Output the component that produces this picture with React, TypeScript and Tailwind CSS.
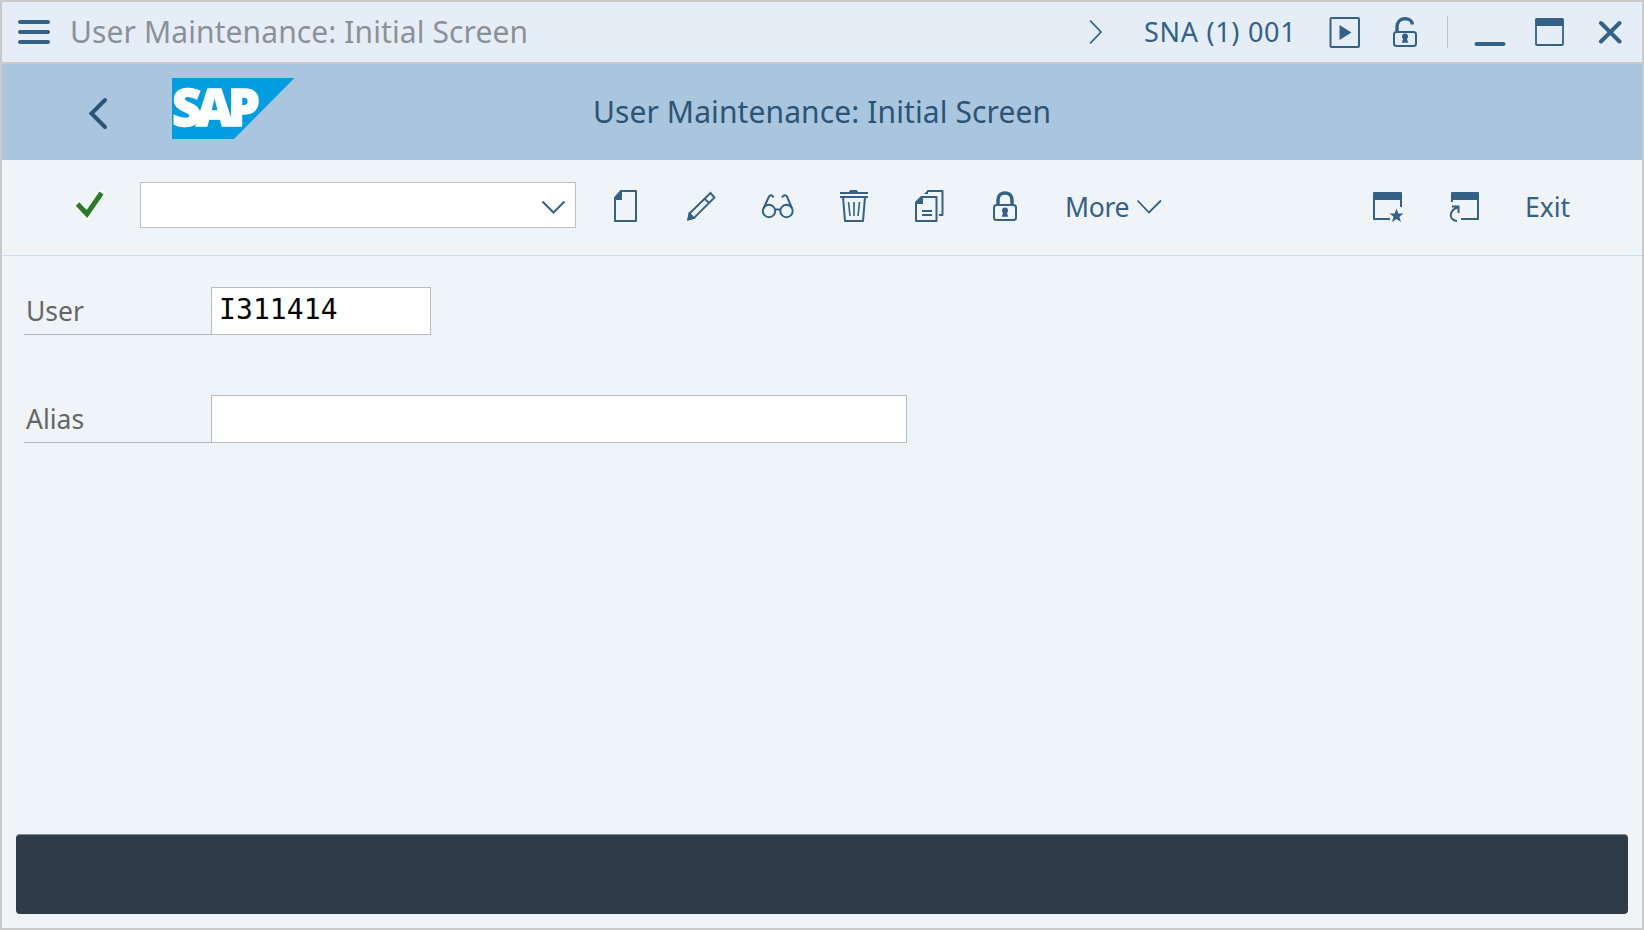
import React from "react";

const INK = "#346187";

type IconProps = { className?: string; w?: number; h?: number; children: React.ReactNode };

function Icon({ className = "", w = 32, h = 34, children }: IconProps) {
  return (
    <svg
      className={"block shrink-0 " + className}
      width={w}
      height={h}
      viewBox={`0 0 ${w} ${h}`}
      fill="none"
      stroke={INK}
      strokeWidth={2}
    >
      {children}
    </svg>
  );
}

function Keyhole({ x, y }: { x: number; y: number }) {
  return (
    <g stroke="none" fill={INK}>
      <circle cx={x} cy={y} r={3} />
      <path d={`M${x - 1.4} ${y + 1} L${x - 3.3} ${y + 6.2} H${x + 3.3} L${x + 1.4} ${y + 1} Z`} />
    </g>
  );
}

function TitleBar() {
  return (
    <header className="flex h-[62px] shrink-0 items-start border-b-2 border-[#cacaca] bg-[#e5eef7]">
      <Icon className="ml-4 mt-[18px]" w={32} h={24}>
        <path d="M2 2H30M2 12H30M2 22H30" strokeWidth={4} strokeLinecap="round" />
      </Icon>
      <span className="ml-[20px] mt-[10px] w-[480px] whitespace-nowrap text-[30px] leading-[40px] tracking-[0.1px] text-[#8c9197]">
        User Maintenance: Initial Screen
      </span>
      <Icon className="ml-auto mt-[17px]" w={16} h={26}>
        <path d="M2 1.5L13 13L2 24.5" strokeWidth={1.8} />
      </Icon>
      <span className="ml-[40px] mt-[11px] w-[153px] whitespace-nowrap text-[27px] leading-[38px] tracking-[0.7px] text-[#346187]">
        SNA (1) 001
      </span>
      <Icon className="ml-[32px] mt-[15px]" w={32} h={32}>
        <rect x={1.5} y={1} width={28.5} height={29} rx={1} />
        <path d="M10.5 8V23L22.5 15.5Z" fill={INK} stroke="none" />
      </Icon>
      <Icon className="ml-[32px] mt-[15px]" w={26} h={32}>
        <path d="M4 14V10C4 -0.5 18.5 -0.5 19.5 7.5" strokeWidth={3.4} />
        <rect x={1} y={15} width={22} height={14} rx={2.5} />
        <Keyhole x={12} y={19.5} />
      </Icon>
      <span className="ml-[28px] mt-[14px] h-8 w-px bg-[#bfc3c8]" />
      <Icon className="ml-[26px] mt-[15px]" w={32} h={32}>
        <path d="M2.5 27H29.5" strokeWidth={4} strokeLinecap="round" />
      </Icon>
      <Icon className="ml-[29px] mt-[15px]" w={30} h={32}>
        <rect x={1} y={2} width={27} height={26} rx={1} strokeWidth={1.8} />
        <path d="M0.5 1.5H28.5V9H0.5Z" fill={INK} stroke="none" />
      </Icon>
      <Icon className="ml-[33px] mr-[20px] mt-[15px]" w={24} h={32}>
        <path d="M3 6L21.5 24.5M21.5 6L3 24.5" strokeWidth={4} strokeLinecap="round" />
      </Icon>
    </header>
  );
}

function BrandBar() {
  return (
    <div className="grid h-24 shrink-0 grid-cols-[1fr_auto_1fr] items-start bg-[#aac5de]">
      <div className="flex">
        <Icon className="ml-[86px] mt-[33px]" w={22} h={34}>
          <path d="M17 3L3.5 16.5L17 30" stroke="#2b5475" strokeWidth={4} strokeLinecap="round" />
        </Icon>
        <svg className="ml-[62px] mt-[14px] block overflow-visible" width={123} height={61} viewBox="0 0 123 61">
          <path d="M0 0H122.5L62 61H0Z" fill="#009de0" />
          <text
            x={0}
            y={47.5}
            textLength={88}
            lengthAdjust="spacing"
            fill="#fff"
            stroke="#fff"
            strokeWidth={1.3}
            fontFamily="'Open Sans', 'Noto Sans', sans-serif"
            fontWeight={800}
            fontSize={51}
          >
            SAP
          </text>
        </svg>
      </div>
      <h1 className="mt-[28px] whitespace-nowrap text-[30px] leading-[40px] tracking-[0.1px] text-[#2b5475]">
        User Maintenance: Initial Screen
      </h1>
      <div />
    </div>
  );
}

function Toolbar() {
  return (
    <div className="flex h-24 shrink-0 items-start border-b border-[#d0dfed]">
      <Icon className="ml-[72px] mt-[28px]" w={32} h={34}>
        <path d="M4.5 17L13 26L27.500 6" stroke="#fff" strokeWidth={8} strokeLinecap="round" />
        <path d="M3.5 16L13 26L27.5 5" stroke="#297d27" strokeWidth={5} />
      </Icon>
      <div className="ml-[34px] mt-[22px] flex h-[46px] w-[436px] items-center justify-end border border-[#bcc0c4] bg-white pr-[8px] pt-[3px]">
        <Icon w={26} h={16}>
          <path d="M1.5 2.5L12.5 13.5L23.5 2.5" />
        </Icon>
      </div>
      <Icon className="ml-[36px] mt-[29px]" w={28} h={34}>
        <path d="M9 2H24V32H3V9Z" strokeLinejoin="round" />
        <path d="M10 1V11H2V9L9 1Z" fill={INK} stroke="none" />
      </Icon>
      <Icon className="ml-[46px] mt-[29px]" w={32} h={34}>
        <path d="M3.5 24.5L24.5 4L28.5 8.5L8 29L2.5 30.5ZM18.5 9.5L23 14" strokeWidth={1.9} />
        <path d="M3 22.5L9.5 29.5L1 31.5Z" fill={INK} stroke="none" />
      </Icon>
      <Icon className="ml-[43px] mt-[29px]" w={34} h={34}>
        <circle cx={8} cy={22} r={6.2} />
        <circle cx={25.5} cy={22} r={6.2} />
        <path d="M14 20.5H19.5M2.5 19.5L8 7.5Q10.500 4.5 12.5 8.5M31 19.5L26 7.5Q23.5 4.5 21 8.5" />
      </Icon>
      <Icon className="ml-[43px] mt-[29px]" w={32} h={34}>
        <path d="M2 4H30M2 8H30" />
        <path d="M11 4Q11 1 13 1H18Q20 1 20 4Z" fill={INK} stroke="none" />
        <path d="M5 8L7 32H25L27 8" strokeLinejoin="round" />
        <path d="M10.5 13L12 27M16 13V27M21.5 13L20 27" strokeWidth={1.6} />
      </Icon>
      <Icon className="ml-[43px] mt-[29px]" w={32} h={34}>
        <path d="M9 8H23.5V32H3V14Z" strokeLinejoin="round" />
        <path d="M10 7V15H2V13L8 7Z" fill={INK} stroke="none" />
        <path d="M14 2H29.5V26H26M9 22H19M9 26H19" strokeLinejoin="round" />
        <path d="M11 5L15 1V5Z" fill={INK} stroke="none" />
      </Icon>
      <Icon className="ml-[47px] mt-[30px]" w={28} h={34}>
        <path d="M6 16V10C6 0.5 20 0.5 20 10V16" strokeWidth={3.5} />
        <rect x={2} y={15} width={22} height={15} rx={2.5} />
        <Keyhole x={13} y={20.5} />
      </Icon>
      <span className="ml-[45px] mt-[28px] w-[66px] whitespace-nowrap text-[26.5px] leading-[38px] tracking-[-0.3px] text-[#346187]">
        More
      </span>
      <Icon className="ml-[5px] mt-[39px]" w={28} h={16}>
        <path d="M1.5 1.5L13 13.5L25 1.5" strokeWidth={1.8} />
      </Icon>
      <Icon className="ml-auto mt-[29px]" w={32} h={34}>
        <path d="M2 4V30H18M29 4V18" strokeLinejoin="round" />
        <rect x={1} y={3} width={29} height={8} rx={1} fill={INK} stroke="none" />
        <path
          d="M24.5 19.5L26.3 24.500H31.500L27.400 27.800L29 33L24.500 30L20 33L21.600 27.800L17.500 24.500H22.700Z"
          fill={INK}
          stroke="none"
        />
      </Icon>
      <Icon className="ml-[44px] mt-[29px]" w={32} h={34}>
        <path d="M4 4V13M30 4V30H13" strokeLinejoin="round" />
        <rect x={3} y={3} width={28} height={8} rx={1} fill={INK} stroke="none" />
        <path d="M4 17.5H10.5V24M10.5 18C1 21 0 31 9 32" />
      </Icon>
      <span className="ml-[45px] mr-[61px] mt-[28px] w-[56px] whitespace-nowrap text-[26.5px] leading-[38px] text-[#346187]">
        Exit
      </span>
    </div>
  );
}

function Field({ label, value, wide }: { label: string; value: string; wide?: boolean }) {
  return (
    <div className="flex h-12">
      <div className="w-[187px] border-b border-[#b5b9bd] pl-[2px] text-[26.5px] leading-[48px] text-[#666666]">
        {label}
      </div>
      <div
        className={
          (wide ? "w-[696px]" : "w-[220px]") +
          " border border-[#b9bdc1] bg-white pl-[7px] font-['DejaVu_Sans_Mono',monospace] text-[28px] leading-[43px] tracking-[0.1px] text-black"
        }
      >
        {value}
      </div>
    </div>
  );
}

export default function App() {
  return (
    <div className="flex h-[930px] w-[1644px] flex-col overflow-hidden border-2 border-[#cacaca] bg-[#eff4f9] font-['Noto_Sans',sans-serif]">
      <TitleBar />
      <BrandBar />
      <Toolbar />
      <main className="flex flex-1 flex-col gap-[60px] pl-[22px] pt-[31px]">
        <Field label="User" value="I311414" />
        <Field label="Alias" value="" wide />
      </main>
      <footer className="mx-[14px] mb-[14px] h-20 shrink-0 rounded-[4px] border-t border-[#7e8b94] bg-[#2f3c48]" />
    </div>
  );
}
